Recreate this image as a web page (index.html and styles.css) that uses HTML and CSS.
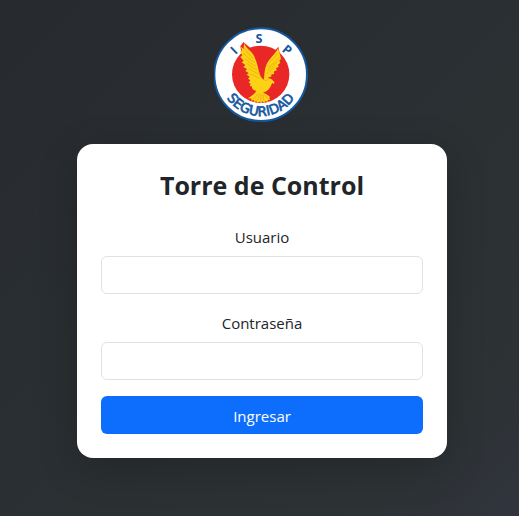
FILE: index.html
```html
<!DOCTYPE html>
<html lang="es">
<head>
<meta charset="utf-8">
<meta name="viewport" content="width=device-width, initial-scale=1">
<title>Torre de Control</title>
<link rel="stylesheet" href="styles.css">
</head>
<body>
<main class="login">
  <svg class="logo" viewBox="27 21 288 288" role="img" aria-label="ISP Seguridad">
    <defs>
      <path id="arc" d="M43 164a124 124 0 0 0 248 0"/>
    </defs>
    <circle cx="167" cy="164" r="139" fill="#fff" stroke="#1558a0" stroke-width="6"/>
    <circle cx="167" cy="163" r="86" fill="#e92726"/>
    <g class="initials">
      <text x="162" y="68">S</text>
      <text transform="translate(96 101) rotate(-44)">I</text>
      <text transform="translate(238 100) rotate(40)">P</text>
    </g>
    <text class="motto"><textPath href="#arc" startOffset="50%">SEGURIDAD</textPath></text>
    <path class="wing-edge" d="M115 66L106 79L110 104L124 128L146 92ZM220 80L206 96L200 120L228 118Z"/>
    <path fill="#fcd116" d="M117 68C121 82 134 89 142 100C154 116 158 138 163 158C165 168 171 177 177 179C178 165 178 148 185 133C192 116 211 103 219 85C222 94 226 105 228 117L223 122L226 128L219 134L221 140L213 145L215 151L206 155L208 161L198 164L200 169L187 174C194 175 201 177 204 182C208 184 209 188 207 192L202 189C198 194 197 202 191 208C186 214 180 216 174 217L188 225L196 232L192 234L196 240L188 240L189 246L180 243L179 249L172 244L169 250L163 245L158 249L154 244L147 246L147 240L138 242L140 236L129 235C139 228 149 222 154 213C143 210 139 205 141 199L134 198L137 191L131 188L136 181L129 176L134 170L125 164L131 159L121 153L126 147L115 141L121 135L110 127L116 122L106 111L112 106L105 95L111 91L107 80L116 86Z"/>
    <g class="feathers">
      <path d="M117 84Q128 102 146 116M114 99Q131 117 149 127M119 116Q136 130 153 139M125 130Q140 143 157 150M131 146L159 162M135 161L162 174M217 100Q208 115 193 128M223 112Q208 129 190 142M218 124Q205 138 187 151M210 140L184 162"/>
      <path d="M160 221L145 237M165 222L156 241M169 223L166 245M173 222L177 242M177 221L188 236"/>
      <path d="M160 152Q166 179 181 181L190 180"/>
    </g>
  </svg>
  <form class="card">
    <h1 class="title">Torre de Control</h1>
    <div class="field">
      <label for="usuario">Usuario</label>
      <input id="usuario" type="text">
    </div>
    <div class="field">
      <label for="clave">Contraseña</label>
      <input id="clave" type="password">
    </div>
    <button type="button">Ingresar</button>
  </form>
</main>
</body>
</html>
```
FILE: styles.css
```css
* { box-sizing: border-box; }
body {
  margin: 0;
  min-height: 100vh;
  background: linear-gradient(135deg, #272b2f 0%, #2d3235 85%, #31343d 100%);
  color: #212529;
  font: 15px/26px "Segoe UI", "Open Sans", sans-serif;
}
.login {
  display: flex;
  flex-direction: column;
  align-items: center;
  gap: 21px;
  padding: 27px 16px 58px 21px;
}
.logo { width: 96px; height: 96px; }
.initials,
.motto {
  fill: #1558a0;
  text-anchor: middle;
}
.initials { font: 700 38px "Open Sans", sans-serif; }
.motto {
  font: 400 40px "DejaVu Sans", sans-serif;
  stroke: #1558a0;
  stroke-width: 2;
}
.wing-edge { fill: #e92726; }
.feathers {
  fill: none;
  stroke: #eda511;
  stroke-width: 2;
}
.card {
  display: flex;
  flex-direction: column;
  gap: 16px;
  width: 100%;
  max-width: 370px;
  padding: 24px;
  border-radius: 16px;
  background: #fff;
  box-shadow: 0 10px 40px rgba(0, 0, 0, 0.2);
  text-align: center;
}
.title {
  margin: 0 0 6px;
  font-size: 25px;
  line-height: 34px;
  font-weight: 700;
}
.field {
  display: flex;
  flex-direction: column;
  gap: 6px;
}
input {
  width: 100%;
  height: 38px;
  padding: 6px 12px;
  border: 1px solid #dee2e6;
  border-radius: 6px;
  background: #fff;
  font: inherit;
}
button {
  height: 38px;
  padding: 7px 12px 5px;
  border: 0;
  border-radius: 6px;
  background: #0d6efd;
  color: #fff;
  font: inherit;
}
```
